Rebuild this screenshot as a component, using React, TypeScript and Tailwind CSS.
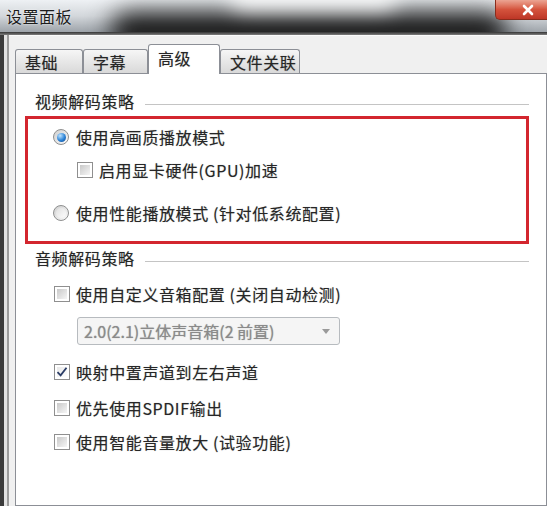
import React from 'react';

function Radio({ checked }: { checked?: boolean }) {
  return (
    <span className="w-[16px] h-[16px] shrink-0 rounded-full border border-[#8e8f8f] bg-gradient-to-br from-[#cfcfcf] to-[#fbfbfb] flex items-center justify-center">
      {checked ? (
        <span className="w-[9px] h-[9px] rounded-full bg-[radial-gradient(circle_at_35%_30%,#bfe4ff,#2a82d6_55%,#0f4386)]" />
      ) : (
        <span className="w-[10px] h-[10px] rounded-full bg-gradient-to-br from-[#e0e0e0] to-[#fdfdfd]" />
      )}
    </span>
  );
}

function Check({ checked }: { checked?: boolean }) {
  return (
    <span className="w-[16px] h-[16px] shrink-0 border border-[#8f8f8f] bg-white p-[2px] flex">
      <span
        className={`flex-1 flex items-center justify-center ${
          checked ? 'bg-gradient-to-br from-[#e8e8e8] to-[#ffffff]' : 'bg-gradient-to-br from-[#c9c9c9] to-[#f6f6f6]'
        }`}
      >
        {checked && (
          <svg width="12" height="12" viewBox="0 0 12 12" className="-m-[1px]">
            <path d="M1.5 6.2 L4.6 9.3 L10.5 1.8" fill="none" stroke="#2a3c66" strokeWidth="1.8" />
          </svg>
        )}
      </span>
    </span>
  );
}

function SectionHeader({ label }: { label: string }) {
  return (
    <div className="flex items-center h-[20px] pl-[10px] gap-[10px]">
      <span className="whitespace-nowrap">{label}</span>
      <span className="flex-1 h-[1px] mt-[6px] bg-[#c4c4c4]" />
    </div>
  );
}

const tabs = [
  { key: 'basic', label: '基础', w: 'w-[68px]' },
  { key: 'subs', label: '字幕', w: 'w-[65px]' },
  { key: 'adv', label: '高级', w: 'w-[72px]' },
  { key: 'assoc', label: '文件关联', w: 'w-[80px]' },
];

export default function App() {
  const active = 'adv';

  return (
    <div className="w-[547px] h-[506px] overflow-hidden flex flex-col bg-[#f0f0f0] text-[#262626] text-[16px] leading-[20px] tracking-[0.6px] [text-shadow:0_0_1px_rgba(0,0,0,0.35)] font-['Noto_Sans_CJK_SC','Noto_Sans',sans-serif]">
      {/* Title bar */}
      <div className="relative h-[32px] shrink-0 overflow-hidden bg-gradient-to-b from-[#eef1f4] via-[#d3d7db] to-[#9ea4aa]">
        <div className="absolute left-[110px] right-[40px] top-[12px] h-[40px] rounded-full bg-[#1a1a1a] blur-[12px]" />
        <div className="absolute left-[230px] right-[150px] top-[-18px] h-[28px] rounded-full bg-[#ffffff] blur-[10px] opacity-80" />
        <span className="relative block pl-[6px] pt-[6px] text-[#1c1c1c] tracking-[0.5px] [text-shadow:0_0_2px_rgba(255,255,255,0.9)]">设置面板</span>
        <div className="absolute right-0 top-0 w-[52px] h-[20px] rounded-bl-[5px] border-l border-b border-[#8a2c1c] bg-gradient-to-b from-[#eba493] via-[#d4533d] to-[#bd3626] flex items-center justify-center">
          <svg width="14" height="12" viewBox="0 0 14 12" className="ml-[12px]">
            <path d="M3 2 L11 10 M11 2 L3 10" stroke="#ffffff" strokeWidth="2.6" strokeLinecap="round" />
          </svg>
        </div>
      </div>
      <div className="h-[3px] shrink-0 bg-gradient-to-b from-[#353535] to-[#808080]" />

      <div className="flex flex-1 min-h-0">
        {/* Left window frame */}
        <div className="flex shrink-0">
          <div className="w-[4px] bg-[#3b3b3b]" />
          <div className="w-[3px] bg-[#e2e2e2]" />
          <div className="w-[2px] bg-[#9c9c9c]" />
        </div>

        <div className="flex-1 flex flex-col pl-[6px] pt-[8px] border-t border-[#fbfbfb]">
          {/* Tabs */}
          <div className="flex items-end h-[29px] shrink-0">
            {tabs.map((tab) => (
              <div
                key={tab.key}
                className={`${tab.w} pl-[9px] flex items-center rounded-t-[3px] border border-b-0 border-[#8c8f96] ${
                  tab.key === active
                    ? 'h-[30px] -mb-[1px] relative z-10 bg-white pb-[3px]'
                    : 'h-[24px] bg-gradient-to-b from-[#f6f6f6] to-[#d9d9d9]'
                }`}
              >
                {tab.label}
              </div>
            ))}
          </div>

          {/* Panel */}
          <div className="flex-1 bg-white border border-[#8c8f96] pl-[9px] pr-[17px] pt-[17px]">
            <SectionHeader label="视频解码策略" />

            <div className="mt-[5px] border-[3px] border-[#d3262f] pt-[8px] pb-[18px] pl-[25px]">
              <div className="flex items-center h-[20px] gap-[7px]">
                <Radio checked />
                <span>使用高画质播放模式</span>
              </div>
              <div className="flex items-center h-[20px] gap-[6px] mt-[13px] pl-[24px]">
                <Check />
                <span>启用显卡硬件(GPU)加速</span>
              </div>
              <div className="flex items-center h-[20px] gap-[7px] mt-[23px]">
                <Radio />
                <span>使用性能播放模式 (针对低系统配置)</span>
              </div>
            </div>

            <div className="mt-[4px]">
              <SectionHeader label="音频解码策略" />
            </div>

            <div className="pl-[29px]">
              <div className="flex items-center h-[20px] gap-[6px] mt-[16px]">
                <Check />
                <span>使用自定义音箱配置 (关闭自动检测)</span>
              </div>
              <div className="mt-[13px] ml-[23px] w-[263px] h-[28px] rounded-[3px] border border-[#b7bbbf] bg-[#f5f5f5] flex items-center pl-[6px] pr-[9px] text-[#8a8a8a] tracking-normal">
                <span className="flex-1">2.0(2.1)立体声音箱(2 前置)</span>
                <svg width="8" height="5" viewBox="0 0 8 5">
                  <path d="M0 0 L8 0 L4 5 Z" fill="#9a9a9a" />
                </svg>
              </div>
              <div className="flex items-center h-[20px] gap-[6px] mt-[17px]">
                <Check checked />
                <span>映射中置声道到左右声道</span>
              </div>
              <div className="flex items-center h-[20px] gap-[6px] mt-[16px]">
                <Check />
                <span>优先使用SPDIF输出</span>
              </div>
              <div className="flex items-center h-[20px] gap-[6px] mt-[14px]">
                <Check />
                <span>使用智能音量放大 (试验功能)</span>
              </div>
            </div>
          </div>
        </div>
      </div>
    </div>
  );
}
